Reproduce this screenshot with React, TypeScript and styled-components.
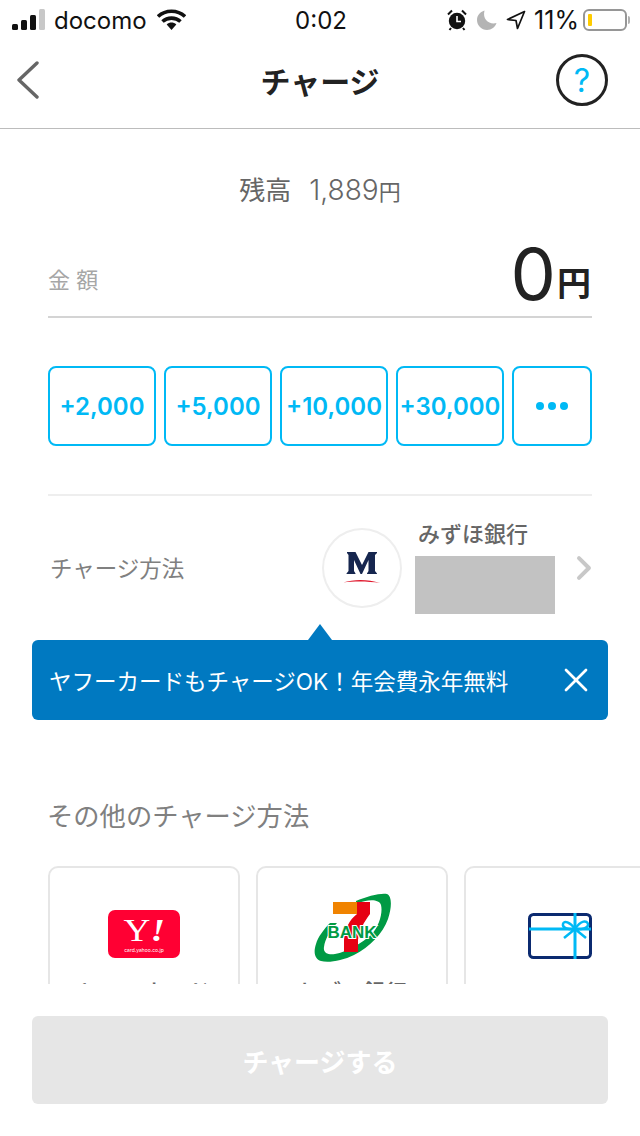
import styled, { createGlobalStyle } from "styled-components";
import { X } from "lucide-react";

const amounts = ["+2,000", "+5,000", "+10,000", "+30,000"];

const GlobalStyle = createGlobalStyle`
  html, body {
    margin: 0;
    padding: 0;
    background: #fff;
  }
  body {
    font-family: "Inter", "Noto Sans CJK JP", sans-serif;
  }
  * {
    box-sizing: border-box;
  }
`;

export default function App() {
  return (
    <Page>
      <GlobalStyle />
      <StatusBar>
        <StatusLeft>
          <svg width="33" height="22" viewBox="0 0 33 22">
            <rect x="0" y="15" width="6" height="6" rx="1.5" fill="#111" />
            <rect x="9" y="11" width="6" height="10" rx="1.5" fill="#111" />
            <rect x="18" y="6" width="6" height="15" rx="1.5" fill="#111" />
            <rect x="27" y="0" width="6" height="21" rx="1.5" fill="#c8c8c8" />
          </svg>
          <Carrier>docomo</Carrier>
          <svg width="29" height="22" viewBox="0 0 29 22">
            <path d="M1 7.5C8.5 0.5 20.5 0.5 28 7.5" fill="none" stroke="#111" strokeWidth="3.6" />
            <path d="M5.5 12.5C10.5 8 18.5 8 23.5 12.5" fill="none" stroke="#111" strokeWidth="3.6" />
            <path d="M9.7 15.4C12.5 13 16.5 13 19.3 15.4L14.5 21Z" fill="#111" />
          </svg>
        </StatusLeft>
        <Clock>0:02</Clock>
        <StatusRight>
          <svg width="20" height="22" viewBox="0 0 20 22">
            <circle cx="10" cy="12" r="8.2" fill="#111" />
            <path d="M10 7V12.5H14" fill="none" stroke="#fff" strokeWidth="1.6" />
            <path d="M1 5.5L5 1.5M19 5.5L15 1.5M4 19L2.5 21M16 19L17.5 21" stroke="#111" strokeWidth="2" />
          </svg>
          <MoonIcon width="20" height="20" viewBox="0 0 20 20">
            <path d="M7.5 0.5C2.8 2 0 5.6 0 10C0 15.5 4.5 20 10 20C14.6 20 18.2 17 19.5 13C13 15 5 10 7.5 0.5Z" fill="#b4b4b4" />
          </MoonIcon>
          <ArrowIcon width="20" height="20" viewBox="0 0 20 20">
            <path d="M18.5 1.5L1.5 9.5L10 10.5L11.5 18.5Z" fill="none" stroke="#111" strokeWidth="1.7" strokeLinejoin="round" />
          </ArrowIcon>
          <Percent>11%</Percent>
          <Battery>
            <BatteryLevel />
          </Battery>
          <BatteryCap />
        </StatusRight>
      </StatusBar>

      <Header>
        <svg width="24" height="38" viewBox="0 0 24 38">
          <path d="M21 2L3 19L21 36" fill="none" stroke="#666" strokeWidth="3.4" strokeLinecap="round" strokeLinejoin="round" />
        </svg>
        <Title>チャージ</Title>
        <HelpButton>?</HelpButton>
      </Header>

      <Content>
        <Balance>
          残高<BalanceValue>1,889</BalanceValue>
          <BalanceUnit>円</BalanceUnit>
        </Balance>

        <AmountRow>
          <AmountLabel>金 額</AmountLabel>
          <AmountValue>
            <AmountNumber>0</AmountNumber>
            <AmountUnit>円</AmountUnit>
          </AmountValue>
        </AmountRow>

        <AmountButtons>
          {amounts.map((amount) => (
            <AmountButton key={amount}>{amount}</AmountButton>
          ))}
          <MoreButton>
            <Dot />
            <Dot />
            <Dot />
          </MoreButton>
        </AmountButtons>

        <MethodRow>
          <MethodLabel>チャージ方法</MethodLabel>
          <BankLogo>
            <svg width="40" height="34" viewBox="0 0 40 34">
              <path d="M5 1H13.5L20 14L26.5 1H35V2L33 4V20L35 22.5V23H25V22.5L26.5 20V9L20 23H18.5L12 9V20L13.5 22.5V23H4.5V22.5L6.5 20V4L5 2Z" fill="#16264f" />
              <path d="M1 31.5C12 28 26 28 38 32C26 30 12 30 1 31.5Z" fill="#e0182d" />
            </svg>
          </BankLogo>
          <BankInfo>
            <BankName>みずほ銀行</BankName>
            <BankMask />
          </BankInfo>
          <Chevron width="16" height="26" viewBox="0 0 16 26">
            <path d="M3 3L13 13L3 23" fill="none" stroke="#c8c8c8" strokeWidth="4" strokeLinecap="round" strokeLinejoin="round" />
          </Chevron>
        </MethodRow>
      </Content>

      <Notice>
        <NoticeText>ヤフーカードもチャージOK！年会費永年無料</NoticeText>
        <X size={40} color="#fff" strokeWidth={1.6} />
      </Notice>

      <OtherSection>
        <OtherTitle>その他のチャージ方法</OtherTitle>
        <CardRow>
          <MethodCard>
            <CardLogo>
              <YahooLogo>
                <YahooMark>
                  Y<YahooBang>!</YahooBang>
                </YahooMark>
                <YahooDomain>card.yahoo.co.jp</YahooDomain>
              </YahooLogo>
            </CardLogo>
            <CardName>ヤフーカード</CardName>
          </MethodCard>
          <MethodCard>
            <CardLogo>
              <svg width="80" height="82" viewBox="0 0 80 82">
                <path d="M44 8C55 3 70 -0.5 75 1C80 3 80 14 76 26C71 40 58 54 42 62C30 68 16 70 9 68C3 66 1 60 4 51C6 44 12 36 18 30L25 30C18 38 13 46 12 54C11 60 16 62 23 61C35 59 50 50 60 41C67 33 71 20 69 12C67 6 56 6 44 11Z" fill="#009a44" />
                <rect x="21" y="9" width="24" height="12" fill="#f08300" />
                <path d="M45 9H58V21C52 29 47 38 46 47V59H32V47C33 36 37 27 45 21Z" fill="#e60012" />
                <BankMark x="40" y="45" textAnchor="middle">BANK</BankMark>
              </svg>
            </CardLogo>
            <CardName>セブン銀行</CardName>
          </MethodCard>
          <MethodCard>
            <CardLogo>
              <svg width="64" height="50" viewBox="0 -4 64 50">
                <rect x="1.5" y="1.5" width="61" height="43" rx="4" fill="#fff" stroke="#0b2a70" strokeWidth="3" />
                <path d="M1 16H63M47 0V46" stroke="#00b9f5" strokeWidth="3" fill="none" />
                <path d="M47 16C42 9 36 7 35 11C34 15 41 17 47 16C53 7 59 7 60 11C61 15 53 17 47 16L36 25M47 16L58 25" stroke="#00b9f5" strokeWidth="2.5" fill="none" />
              </svg>
            </CardLogo>
          </MethodCard>
        </CardRow>
      </OtherSection>

      <Footer>
        <ChargeButton>チャージする</ChargeButton>
      </Footer>
    </Page>
  );
}

const Page = styled.div`
  width: 640px;
  height: 1136px;
  overflow: hidden;
  background: #fff;
  color: #222;
`;

const StatusBar = styled.div`
  height: 40px;
  padding: 0 10px 0 12px;
  display: grid;
  grid-template-columns: 1fr auto 1fr;
  align-items: center;
  color: #111;
`;

const StatusLeft = styled.div`
  display: flex;
  align-items: center;
  gap: 9px;
`;

const Carrier = styled.span`
  font-size: 24px;
  margin-right: 1px;
`;

const Clock = styled.span`
  font-size: 24px;
`;

const StatusRight = styled.div`
  display: flex;
  align-items: center;
  justify-content: flex-end;
`;

const MoonIcon = styled.svg`
  margin-left: 10px;
`;

const ArrowIcon = styled.svg`
  margin-left: 9px;
`;

const Percent = styled.span`
  font-size: 25px;
  margin: 0 4px 0 8px;
`;

const Battery = styled.div`
  width: 44px;
  height: 22px;
  border: 2px solid #969696;
  border-radius: 6px;
  padding: 3px;
  display: flex;
`;

const BatteryLevel = styled.div`
  width: 4px;
  background: #ffcc00;
  border-radius: 1px;
`;

const BatteryCap = styled.div`
  width: 2px;
  height: 8px;
  margin-left: 1px;
  background: #b0b0b0;
  border-radius: 0 2px 2px 0;
`;

const Header = styled.header`
  height: 89px;
  padding: 0 16px 8px;
  border-bottom: 1px solid #bcbcbc;
  display: grid;
  grid-template-columns: 1fr auto 1fr;
  align-items: center;
`;

const Title = styled.h1`
  margin: 0;
  font-size: 30px;
  font-weight: 700;
  color: #222;
`;

const HelpButton = styled.div`
  justify-self: end;
  width: 52px;
  height: 52px;
  margin-right: 16px;
  border: 3px solid #222;
  border-radius: 50%;
  color: #00b9f5;
  font-size: 32px;
  font-weight: 400;
  display: flex;
  align-items: center;
  justify-content: center;
`;

const Content = styled.div`
  padding: 0 48px;
`;

const Balance = styled.div`
  margin-top: 41px;
  height: 36px;
  display: flex;
  align-items: baseline;
  justify-content: center;
  font-size: 26px;
  color: #666;
`;

const BalanceValue = styled.span`
  margin-left: 18px;
  font-size: 28px;
  font-weight: 300;
`;

const BalanceUnit = styled.span`
  font-size: 22px;
`;

const AmountRow = styled.div`
  margin-top: 33px;
  height: 79px;
  border-bottom: 2px solid #d4d4d4;
  display: flex;
  align-items: center;
  justify-content: space-between;
`;

const AmountLabel = styled.span`
  font-size: 22px;
  color: #a6a6a6;
`;

const AmountValue = styled.div`
  margin: 0 1px 7px 0;
  display: flex;
  align-items: flex-end;
`;

const AmountNumber = styled.span`
  margin-right: 1px;
  font-size: 72px;
  line-height: 72px;
  color: #222;
`;

const AmountUnit = styled.span`
  margin-bottom: 9px;
  font-size: 34px;
  line-height: 34px;
  font-weight: 600;
  color: #222;
`;

const AmountButtons = styled.div`
  margin-top: 48px;
  display: grid;
  grid-template-columns: repeat(4, 108px) 80px;
  gap: 8px;
`;

const AmountButton = styled.button`
  height: 80px;
  padding: 0;
  background: #fff;
  border: 2px solid #00b9f5;
  border-radius: 8px;
  color: #00b9f5;
  font-family: inherit;
  font-size: 24px;
  font-weight: 600;
`;

const MoreButton = styled(AmountButton)`
  display: flex;
  align-items: center;
  justify-content: center;
  gap: 4px;
`;

const Dot = styled.span`
  width: 8px;
  height: 8px;
  border-radius: 50%;
  background: #00b9f5;
`;

const MethodRow = styled.div`
  position: relative;
  margin-top: 48px;
  height: 146px;
  border-top: 2px solid #eee;
  display: flex;
  align-items: flex-start;
  &::after {
    content: "";
    position: absolute;
    left: 260px;
    bottom: 0;
    border-left: 12px solid transparent;
    border-right: 12px solid transparent;
    border-bottom: 16px solid #0079c1;
  }
`;

const MethodLabel = styled.span`
  width: 274px;
  margin: 55px 0 0 2px;
  font-size: 22.5px;
  color: #808080;
`;

const BankLogo = styled.div`
  width: 80px;
  height: 80px;
  margin-top: 32px;
  border: 2px solid #eee;
  border-radius: 50%;
  display: flex;
  align-items: center;
  justify-content: center;
`;

const BankInfo = styled.div`
  width: 141px;
  margin: 24px 0 0 13px;
`;

const BankName = styled.div`
  margin-left: 3px;
  height: 36px;
  font-size: 22px;
  font-weight: 500;
  line-height: 29px;
  color: #666;
`;

const BankMask = styled.div`
  height: 58px;
  background: #c2c2c2;
`;

const Chevron = styled.svg`
  margin: 59px 0 0 21px;
`;

const Notice = styled.div`
  margin: 0 32px;
  height: 80px;
  padding: 0 12px 0 17px;
  background: #0079c1;
  border-radius: 6px;
  display: flex;
  align-items: center;
  justify-content: space-between;
`;

const NoticeText = styled.span`
  font-size: 22.5px;
  color: #fff;
`;

const OtherSection = styled.section`
  margin-top: 80px;
  padding-left: 48px;
  height: 184px;
  overflow: hidden;
`;

const OtherTitle = styled.h2`
  margin: 0 0 0 -1px;
  height: 34px;
  font-size: 26.3px;
  line-height: 34px;
  font-weight: 400;
  color: #808080;
`;

const CardRow = styled.div`
  margin-top: 32px;
  display: flex;
  gap: 16px;
`;

const MethodCard = styled.div`
  flex: 0 0 192px;
  height: 180px;
  border: 2px solid #e6e6e6;
  border-radius: 10px;
  display: flex;
  flex-direction: column;
  align-items: center;
`;

const CardLogo = styled.div`
  height: 82px;
  margin-top: 25px;
  display: flex;
  align-items: center;
  justify-content: center;
`;

const CardName = styled.span`
  margin-top: 1px;
  font-size: 22px;
  line-height: 32px;
  font-weight: 500;
  color: #666;
`;

const YahooLogo = styled.div`
  width: 72px;
  height: 48px;
  background: #ff0033;
  border-radius: 7px;
  color: #fff;
  display: flex;
  flex-direction: column;
  align-items: center;
`;

const YahooMark = styled.span`
  font-family: "Liberation Serif", serif;
  font-size: 31px;
  line-height: 30px;
  margin-top: 6px;
  height: 31px;
  transform: scaleX(1.2);
`;

const YahooBang = styled.span`
  font-style: italic;
  font-weight: 700;
`;

const YahooDomain = styled.span`
  font-size: 5px;
  line-height: 7px;
`;

const BankMark = styled.text`
  font-family: "Liberation Sans", sans-serif;
  font-size: 17px;
  font-weight: 700;
  fill: #009a44;
  stroke: #fff;
  stroke-width: 2px;
  paint-order: stroke;
`;

const Footer = styled.div`
  margin-top: 32px;
  padding: 0 32px;
`;

const ChargeButton = styled.button`
  width: 100%;
  height: 88px;
  border: none;
  border-radius: 6px;
  background: #e6e6e6;
  color: #fff;
  font-family: inherit;
  font-size: 26px;
  font-weight: 700;
`;
